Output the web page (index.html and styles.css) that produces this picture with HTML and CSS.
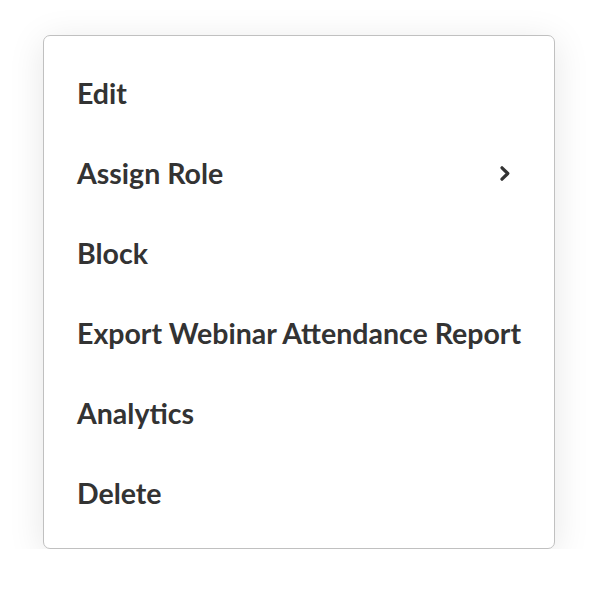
FILE: index.html
```html
<!DOCTYPE html>
<html>
<head>
<meta charset="utf-8">
<link rel="stylesheet" href="styles.css">
</head>
<body>
<div class="menu">
  <div class="item"><span>Edit</span></div>
  <div class="item"><span>Assign Role</span>
    <svg class="chev" width="12" height="17" viewBox="0 0 12 17"><path d="M3 2.8 L8.8 8.5 L3 14.2" fill="none" stroke="#333" stroke-width="3.2" stroke-linecap="round" stroke-linejoin="round"/></svg>
  </div>
  <div class="item"><span>Block</span></div>
  <div class="item"><span>Export Webinar Attendance Report</span></div>
  <div class="item"><span>Analytics</span></div>
  <div class="item"><span>Delete</span></div>
</div>
</body>
</html>
```
FILE: styles.css
```css
html, body {
  margin: 0;
  padding: 0;
  background: #fff;
}
body {
  padding: 35px 0 0 43px;
  font-family: Lato, "Open Sans", sans-serif;
}
.menu {
  width: 510px;
  box-sizing: content-box;
  border: 1px solid #c0c0c0;
  border-radius: 7px;
  background: #fff;
  padding: 17px 0 15px;
  box-shadow: 0 6px 36px rgba(0, 0, 0, 0.1);
}
.item {
  height: 80px;
  display: flex;
  align-items: center;
  justify-content: space-between;
  padding: 0 43px 0 33px;
  font-size: 28.5px;
  font-weight: 700;
  color: #333;
  white-space: nowrap;
}
.chev {
  display: block;
  flex-shrink: 0;
}
```
